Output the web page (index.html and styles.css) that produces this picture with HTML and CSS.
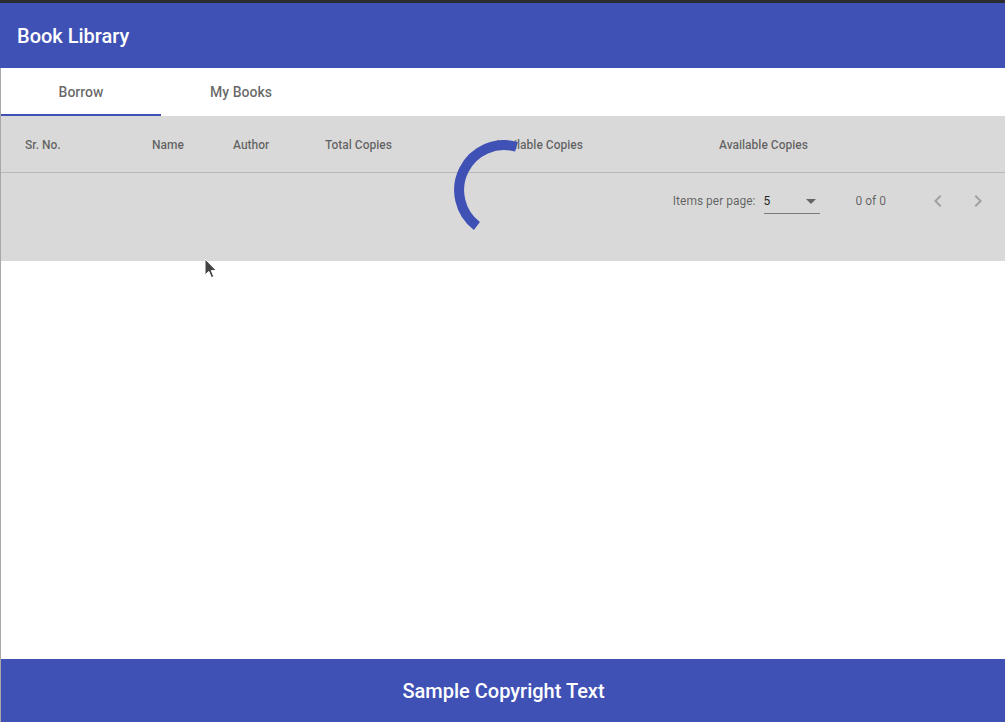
FILE: index.html
```html
<!DOCTYPE html>
<html lang="en">
<head>
<meta charset="utf-8">
<title>Book Library</title>
<link rel="stylesheet" href="styles.css">
</head>
<body>
<div class="app">
  <div class="topline"></div>
  <header class="toolbar"><span class="title">Book Library</span></header>
  <div class="frame">
    <nav class="tabs">
      <div class="tab active">Borrow</div>
      <div class="tab">My Books</div>
    </nav>
    <main class="content">
      <section class="table-wrap">
        <div class="thead">
          <div class="th first">Sr. No.</div>
          <div class="th">Name</div>
          <div class="th">Author</div>
          <div class="th">Total Copies</div>
          <div class="th">Available Copies</div>
          <div class="th">Available Copies</div>
        </div>
        <div class="paginator">
          <span class="pg-label">Items per page:</span>
          <div class="select">
            <span class="select-value">5</span>
            <span class="select-arrow"></span>
          </div>
          <span class="range">0 of 0</span>
          <button class="nav-btn" aria-label="Previous page">
            <svg viewBox="0 0 24 24" width="24" height="24"><path d="M15.41 7.41 14 6l-6 6 6 6 1.41-1.41L10.83 12z" fill="currentColor"/></svg>
          </button>
          <button class="nav-btn" aria-label="Next page">
            <svg viewBox="0 0 24 24" width="24" height="24"><path d="M10 6 8.59 7.41 13.17 12l-4.58 4.59L10 18l6-6z" fill="currentColor"/></svg>
          </button>
        </div>
        <svg class="spinner" viewBox="0 0 100 100" width="100" height="100"><path d="M62.5 6.8 A45 45 0 0 0 22.9 85.9" fill="none" stroke="#3f51b5" stroke-width="10"/></svg>
        <svg class="cursor" viewBox="0 0 14 22" width="14" height="22"><path d="M1 1 L1 17 L4.8 13.4 L7.4 19.6 L9.8 18.6 L7.3 12.6 L12.4 12.6 Z" fill="#444" stroke="#fff" stroke-width="1"/></svg>
      </section>
    </main>
    <footer class="footer">Sample Copyright Text</footer>
  </div>
</div>
</body>
</html>
```
FILE: styles.css
```css
* { box-sizing: border-box; }
html, body { margin: 0; padding: 0; }
body {
  font-family: Roboto, "Noto Sans", "Liberation Sans", sans-serif;
  background: #fff;
}
.app {
  display: flex;
  flex-direction: column;
  height: 722px;
  width: 1005px;
  overflow: hidden;
}
.topline { height: 3px; background: #2b2c2e; flex: none; }
.toolbar {
  height: 65px;
  flex: none;
  background: #3f51b5;
  color: #fff;
  display: flex;
  align-items: center;
  padding-left: 17px;
}
.title { font-size: 20px; font-weight: 500; }
.frame {
  flex: 1;
  display: flex;
  flex-direction: column;
  border-left: 1px solid #a8a8a8;
  min-height: 0;
}
.tabs { display: flex; height: 48px; flex: none; background: #fff; }
.tab {
  width: 160px;
  display: flex;
  align-items: center;
  justify-content: center;
  font-size: 14px;
  font-weight: 500;
  color: rgba(0,0,0,.6);
}
.tab.active { box-shadow: inset 0 -2px 0 #3f51b5; }
.content { flex: 1; min-height: 0; }
.table-wrap {
  position: relative;
  background: #d9d9d9;
  padding-bottom: 32px;
}
.thead {
  display: grid;
  grid-template-columns: 151px 81px 92px 168px 226px 1fr;
  height: 57px;
  align-items: center;
  border-bottom: 1px solid #b9b9b9;
}
.th { font-size: 12px; font-weight: 500; color: rgba(0,0,0,.56); padding-top: 1px; }
.th.first { padding-left: 24px; }
.th:nth-child(5) { padding-left: 1px; }
.paginator {
  height: 56px;
  display: flex;
  align-items: center;
  justify-content: flex-end;
  padding-right: 7px;
  font-size: 12px;
  color: rgba(0,0,0,.56);
}
.pg-label { margin-right: 8px; }
.select {
  width: 56px;
  height: 24px;
  display: flex;
  align-items: center;
  justify-content: space-between;
  border-bottom: 1px solid #7a7a7a;
  margin-right: 36px;
  margin-top: 1px;
}
.select-value { color: rgba(0,0,0,.87); font-size: 12px; }
.select-arrow {
  width: 0; height: 0;
  border-left: 5px solid transparent;
  border-right: 5px solid transparent;
  border-top: 5px solid rgba(0,0,0,.54);
  margin-right: 4px;
}
.range { margin-right: 32px; }
.nav-btn {
  width: 40px; height: 40px;
  border: none; background: none; padding: 0;
  display: flex; align-items: center; justify-content: center;
  color: rgba(0,0,0,.26);
}
.spinner { position: absolute; left: 453px; top: 24px; }
.cursor { position: absolute; left: 203px; top: 142px; }
.footer {
  height: 63px;
  flex: none;
  background: #3f51b5;
  color: #fff;
  font-size: 20px;
  font-weight: 500;
  display: flex;
  align-items: center;
  justify-content: center;
  padding-left: 1px;
}
```
